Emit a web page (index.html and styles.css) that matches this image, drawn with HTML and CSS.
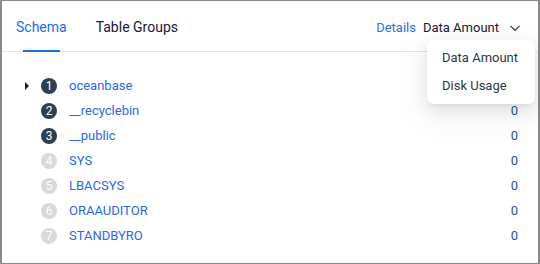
FILE: index.html
```html
<!DOCTYPE html>
<html lang="en">
<head>
  <meta charset="UTF-8">
  <title>Schema</title>
  <link rel="stylesheet" href="styles.css">
</head>
<body>
  <div class="card">
    <div class="header">
      <div class="tabs">
        <div class="tab active">Schema</div>
        <div class="tab">Table Groups</div>
      </div>
      <div class="extra">
        <a class="details">Details</a>
        <div class="select">
          <span>Data Amount</span>
          <svg width="12" height="12" viewBox="0 0 12 12"><path d="M1.5 3.8 L6 8.3 L10.5 3.8" fill="none" stroke="#333" stroke-width="1.2"/></svg>
        </div>
      </div>
    </div>

    <div class="list">
      <div class="row">
        <span class="caret"></span>
        <span class="badge dark">1</span>
        <span class="name">oceanbase</span>
        <span class="value">0</span>
      </div>
      <div class="row">
        <span class="caret blank"></span>
        <span class="badge dark">2</span>
        <span class="name">__recyclebin</span>
        <span class="value">0</span>
      </div>
      <div class="row">
        <span class="caret blank"></span>
        <span class="badge dark">3</span>
        <span class="name">__public</span>
        <span class="value">0</span>
      </div>
      <div class="row">
        <span class="caret blank"></span>
        <span class="badge">4</span>
        <span class="name">SYS</span>
        <span class="value">0</span>
      </div>
      <div class="row">
        <span class="caret blank"></span>
        <span class="badge">5</span>
        <span class="name">LBACSYS</span>
        <span class="value">0</span>
      </div>
      <div class="row">
        <span class="caret blank"></span>
        <span class="badge">6</span>
        <span class="name">ORAAUDITOR</span>
        <span class="value">0</span>
      </div>
      <div class="row">
        <span class="caret blank"></span>
        <span class="badge">7</span>
        <span class="name">STANDBYRO</span>
        <span class="value">0</span>
      </div>
    </div>

    <div class="dropdown">
      <div class="option">Data Amount</div>
      <div class="option">Disk Usage</div>
    </div>
  </div>
</body>
</html>
```

FILE: styles.css
```css
* {
  box-sizing: border-box;
}

body {
  margin: 0;
  font-family: Roboto, "Noto Sans", sans-serif;
  font-size: 13px;
  color: #132039;
  background: #ffffff;
}

.card {
  position: relative;
  width: 540px;
  height: 264px;
  border: 1px solid #8a8a8a;
  border-left-width: 2px;
  border-right-width: 2px;
  background: #ffffff;
}

.header {
  display: flex;
  justify-content: space-between;
  align-items: stretch;
  height: 51px;
  border-bottom: 1px solid #e3e6ee;
  padding: 0 17px 0 14px;
}

.tabs {
  display: flex;
  gap: 29px;
}

.tab {
  position: relative;
  display: flex;
  align-items: center;
  padding-top: 2px;
  font-size: 14px;
  color: #132039;
  white-space: nowrap;
}

.tab.active {
  color: #1a6cf5;
}

.tab.active::after {
  content: "";
  position: absolute;
  left: 7px;
  right: 7px;
  bottom: -1px;
  height: 2px;
  background: #0d6efd;
}

.extra {
  display: flex;
  align-items: center;
  gap: 7px;
  padding-top: 2px;
  white-space: nowrap;
}

.details {
  color: #2f6ef0;
}

.select {
  display: flex;
  align-items: center;
  gap: 10px;
}

.select svg {
  margin-top: 1px;
}

.list {
  padding: 21px 20px 0 20px;
}

.row {
  display: flex;
  align-items: center;
  height: 25px;
}

.caret {
  width: 0;
  height: 0;
  margin-left: 3px;
  border-top: 4px solid transparent;
  border-bottom: 4px solid transparent;
  border-left: 4px solid #1c1c1c;
}

.caret.blank {
  border-left-color: transparent;
}

.badge {
  display: flex;
  align-items: center;
  justify-content: center;
  width: 16px;
  height: 16px;
  margin-left: 12px;
  border-radius: 50%;
  background: #d9d9d9;
  color: #ffffff;
  font-size: 12px;
}

.badge.dark {
  background: #2f3e50;
}

.name {
  flex: 1;
  margin-left: 12px;
  color: #2b66f0;
}

.value {
  color: #1d4fb8;
}

.dropdown {
  position: absolute;
  top: 39px;
  left: 425px;
  width: 108px;
  padding: 4px 0;
  background: #ffffff;
  border-radius: 7px;
  box-shadow: 0 6px 16px rgba(0, 0, 0, 0.08), 0 3px 6px -4px rgba(0, 0, 0, 0.12), 0 9px 28px 8px rgba(0, 0, 0, 0.05);
}

.option {
  height: 28px;
  line-height: 28px;
  padding: 0 15px;
  color: #2d3648;
  white-space: nowrap;
}
```
